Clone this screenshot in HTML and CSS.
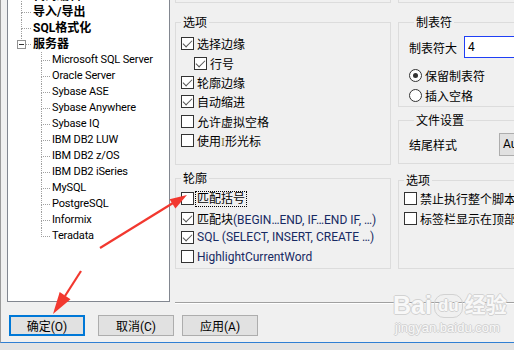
FILE: index.html
```html
<!DOCTYPE html>
<html lang="zh-CN">
  <head>
    <meta charset="UTF-8" />
    <title>选项</title>
    <link rel="stylesheet" href="styles.css">
  </head>
  <body>
    <div class="desk">
      <div class="strip"></div>
      <div class="dialog">
        <div class="main">
          <div class="tree">
            <ul class="lvl1">
              <li class="node top"><span>代码编辑</span></li>
              <li class="node top"><span>导入/导出</span></li>
              <li class="node top"><span>SQL格式化</span></li>
              <li class="node top"><span class="toggle"></span><span>服务器</span>
                <ul class="lvl2">
                  <li class="node">Microsoft SQL Server</li>
                  <li class="node">Oracle Server</li>
                  <li class="node">Sybase ASE</li>
                  <li class="node">Sybase Anywhere</li>
                  <li class="node">Sybase IQ</li>
                  <li class="node">IBM DB2 LUW</li>
                  <li class="node">IBM DB2 z/OS</li>
                  <li class="node">IBM DB2 iSeries</li>
                  <li class="node">MySQL</li>
                  <li class="node">PostgreSQL</li>
                  <li class="node">Informix</li>
                  <li class="node">Teradata</li>
                </ul>
              </li>
            </ul>
          </div>
          <div class="pane">
            <div class="cols">
              <div class="col">
                <div class="cut"></div>
                <div class="group g-options">
                  <span class="title">选项</span>
                  <div class="rows">
                    <div class="row"><span class="cb on"></span><span>选择边缘</span></div>
                    <div class="row sub"><span class="cb on"></span><span>行号</span></div>
                    <div class="row"><span class="cb on"></span><span>轮廓边缘</span></div>
                    <div class="row"><span class="cb on"></span><span>自动缩进</span></div>
                    <div class="row"><span class="cb"></span><span>允许虚拟空格</span></div>
                    <div class="row"><span class="cb"></span><span>使用<span class="ibeam">I</span>形光标</span></div>
                  </div>
                </div>
                <div class="group g-outline">
                  <span class="title">轮廓</span>
                  <div class="rows">
                    <div class="row"><span class="cb"></span><span class="focus">匹配括号</span></div>
                    <div class="row"><span class="cb on"></span><span>匹配块<span class="latin">(BEGIN…END, IF…END IF, …)</span></span></div>
                    <div class="row"><span class="cb on"></span><span class="latin">SQL (SELECT, INSERT, CREATE …)</span></div>
                    <div class="row"><span class="cb"></span><span class="latin">HighlightCurrentWord</span></div>
                  </div>
                </div>
              </div>
              <div class="col">
                <div class="cut"></div>
                <div class="group g-tabs">
                  <span class="title">制表符</span>
                  <div class="field">
                    <span class="field-label">制表符大</span>
                    <span class="text-input">4</span>
                  </div>
                  <div class="radios">
                    <div class="row"><span class="rb on"></span><span>保留制表符</span></div>
                    <div class="row"><span class="rb"></span><span>插入空格</span></div>
                  </div>
                </div>
                <div class="group g-file">
                  <span class="title">文件设置</span>
                  <div class="field">
                    <span class="field-label wide">结尾样式</span>
                    <span class="mini-btn">Auto</span>
                  </div>
                </div>
                <div class="group g-misc">
                  <span class="title">选项</span>
                  <div class="rows">
                    <div class="row"><span class="cb"></span><span>禁止执行整个脚本</span></div>
                    <div class="row"><span class="cb"></span><span>标签栏显示在顶部</span></div>
                  </div>
                </div>
              </div>
            </div>
          </div>
        </div>
        <div class="actions">
          <button class="btn default">确定(<u>O</u>)</button>
          <button class="btn cancel">取消(<u>C</u>)</button>
          <button class="btn apply">应用(<u>A</u>)</button>
        </div>
      </div>
    </div>

    <svg class="marks" width="514" height="350" viewBox="0 0 514 350">
      <line x1="100" y1="248" x2="173" y2="203" stroke="#f2382f" stroke-width="2.2" />
      <polygon points="187,195 175.4,208.6 169.6,199.2" fill="#f2382f" />
      <line x1="81" y1="271" x2="65" y2="296" stroke="#f2382f" stroke-width="2.2" />
      <polygon points="53,314 70.5,299.2 59.7,292" fill="#f2382f" />
    </svg>

    <div class="watermark">
      <div class="wm-top"><span>Bai</span><span class="paw">du</span><span class="wm-cn">经验</span></div>
      <div class="wm-url">jingyan.baidu.com</div>
    </div>
  </body>
</html>
```

FILE: styles.css
```css
* {
  padding: 0;
  margin: 0;
  box-sizing: border-box;
}
html, body {
  width: 100%;
  height: 100%;
  overflow: hidden;
}
body {
  background: #e3e3e3;
  font-family: Roboto, "Noto Sans CJK SC", sans-serif;
  font-size: 12px;
  color: #000;
}
ul {
  list-style: none;
}
.desk {
  display: flex;
  height: 350px;
}
.strip {
  width: 3px;
  background: linear-gradient(#d7dbe1 0, #c4cbd6 60%, #7d8aa3 81%, #c9cdd4 82%, #bfc4cc 100%);
}
.dialog {
  flex: 1;
  height: 343px;
  background: #f0f0f0;
  border-left: 1px solid #9a9a9a;
  border-bottom: 1px solid #2f7fd3;
}
.main {
  display: flex;
}

/* tree */
.tree {
  width: 163px;
  height: 302px;
  margin-left: 6px;
  background: #fff;
  border: 1px solid #828790;
  border-top: none;
  overflow: hidden;
}
.lvl1 {
  margin-top: -12px;
  padding-left: 13px;
}
.node {
  position: relative;
  line-height: 16px;
  white-space: nowrap;
}
.node::before {
  content: "";
  position: absolute;
  left: 0;
  top: 0;
  height: 8px;
  border-left: 1px dotted #a0a0a0;
  border-bottom: 1px dotted #a0a0a0;
}
.node::after {
  content: "";
  position: absolute;
  left: 0;
  top: 9px;
  bottom: 0;
  border-left: 1px dotted #a0a0a0;
}
.node:last-child::after {
  display: none;
}
.lvl1 > .node {
  padding-left: 12px;
  font-weight: bold;
}
.lvl1 > .node::before {
  width: 9px;
}
.lvl2 {
  margin-left: 8px;
}
.lvl2 > .node {
  padding-left: 11px;
  font-weight: normal;
  font-size: 11px;
  letter-spacing: -0.15px;
}
.lvl2 > .node::before {
  width: 8px;
}
.toggle {
  position: absolute;
  left: -4px;
  top: 4px;
  width: 9px;
  height: 9px;
  border: 1px solid #919191;
  background: #fff;
  z-index: 1;
  display: flex;
  align-items: center;
  justify-content: center;
}
.toggle::after {
  content: "";
  width: 5px;
  height: 1px;
  background: #333;
}

/* right side */
.pane {
  flex: 1;
  height: 303px;
  margin-left: 5px;
  border-bottom: 1px solid #a0a0a0;
  box-shadow: 0 1px 0 #fff;
  overflow: hidden;
}
.cols {
  display: grid;
  grid-template-columns: 216px 140px;
  column-gap: 7px;
}
.cut {
  height: 3px;
  border: 1px solid #dcdcdc;
  border-top: none;
}
.group {
  border: 1px solid #dcdcdc;
}
.title {
  display: block;
  width: fit-content;
  line-height: 16px;
  margin: -8px 0 0 5px;
  padding: 0 2px;
  background: #f0f0f0;
}
.g-options {
  height: 143px;
  margin-top: 19px;
}
.g-options .rows {
  margin-top: 3px;
  padding-left: 5px;
}
.g-outline {
  height: 91px;
  margin-top: 13px;
}
.g-outline .rows {
  margin-top: 2px;
  padding-left: 5px;
}
.g-tabs {
  height: 85px;
  margin-top: 19px;
  padding-left: 10px;
}
.g-file {
  height: 44px;
  margin-top: 13px;
  padding-left: 10px;
}
.g-misc {
  height: 89px;
  margin-top: 16px;
}
.g-misc .rows {
  padding-left: 5px;
}
.row {
  display: flex;
  align-items: center;
  gap: 3px;
  height: 19.4px;
  white-space: nowrap;
}
.row.sub {
  padding-left: 13px;
}
.latin {
  color: #172a63;
}
.focus {
  outline: 1px dotted #000;
  line-height: 14px;
  padding: 0 1px;
  margin-left: -1px;
}
.ibeam {
  font-family: "Liberation Serif", serif;
  color: #8a7a3c;
}
.cb {
  flex: none;
  width: 13px;
  height: 13px;
  border: 1px solid #333;
  background: #fff;
  display: inline-flex;
  align-items: center;
  justify-content: center;
}
.cb.on::after {
  content: "";
  width: 4px;
  height: 8px;
  margin-top: -2px;
  border: solid #555;
  border-width: 0 1.5px 1.5px 0;
  transform: rotate(45deg);
}
.rb {
  flex: none;
  width: 13px;
  height: 13px;
  border: 1px solid #333;
  border-radius: 50%;
  background: #fff;
  display: inline-flex;
  align-items: center;
  justify-content: center;
}
.rb.on::after {
  content: "";
  width: 5px;
  height: 5px;
  border-radius: 50%;
  background: #333;
}
.field {
  display: flex;
  align-items: center;
  white-space: nowrap;
}
.g-tabs .field {
  margin-top: 5px;
  height: 22px;
}
.g-file .field {
  margin-top: 4px;
  height: 23px;
}
.field-label {
  width: 55px;
  flex: none;
}
.field-label.wide {
  width: 90px;
}
.text-input {
  flex: none;
  width: 80px;
  height: 22px;
  line-height: 20px;
  padding-left: 3px;
  border: 1px solid #1f3ff5;
  background: #fff;
}
.radios {
  margin-top: 7px;
}
.radios .row {
  height: 20px;
}
.mini-btn {
  flex: none;
  width: 60px;
  height: 23px;
  line-height: 21px;
  padding-left: 3px;
  border: 1px solid #adadad;
  background: #e1e1e1;
}

/* buttons */
.actions {
  display: flex;
  margin-top: 12px;
}
.btn {
  width: 76px;
  height: 21px;
  font: inherit;
  border: 1px solid #adadad;
  background: #e1e1e1;
  color: #000;
}
.btn u {
  text-decoration: none;
}
.default {
  margin-left: 8px;
  border: 2px solid #0078d7;
}
.cancel {
  margin-left: 13px;
}
.apply {
  margin-left: 8px;
}

/* annotations over the screenshot */
.marks {
  position: absolute;
  left: 0;
  top: 0;
  pointer-events: none;
}
.watermark {
  position: absolute;
  left: 393px;
  top: 290px;
  color: #f8f8f8;
  text-shadow: 1px 0 0 #d2d2d2, -1px 0 0 #d2d2d2, 0 1px 0 #d2d2d2, 0 -1px 0 #d2d2d2;
  font-family: "Liberation Sans", "Noto Sans CJK SC", sans-serif;
  pointer-events: none;
}
.wm-top {
  display: flex;
  align-items: flex-end;
  font-size: 25px;
  font-weight: bold;
  line-height: 30px;
}
.paw {
  font-size: 17px;
  line-height: 22px;
  padding: 0 3px;
  margin: 0 2px 2px;
  border: 1px solid #d2d2d2;
  border-radius: 10px;
}
.wm-cn {
  font-size: 21px;
}
.wm-url {
  font-size: 13px;
  line-height: 16px;
  padding-left: 2px;
}
```
